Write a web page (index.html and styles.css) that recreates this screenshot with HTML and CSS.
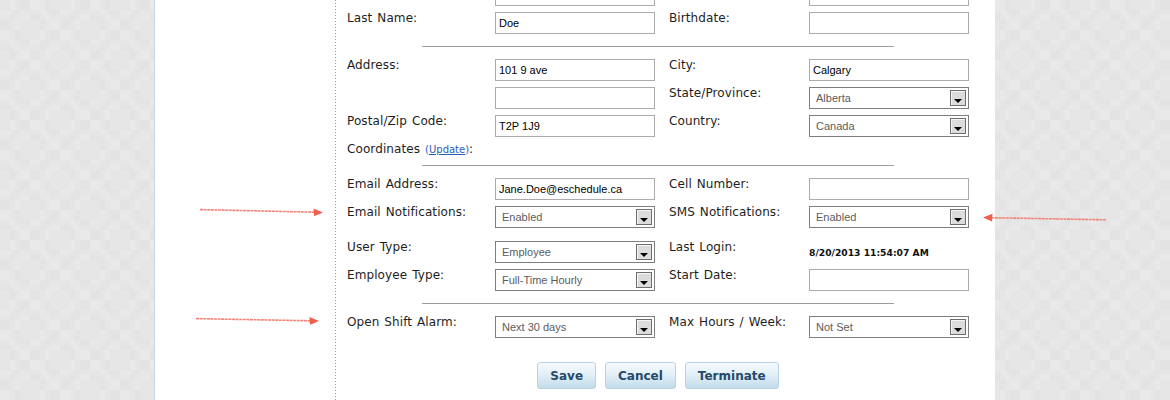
FILE: index.html
```html
<!DOCTYPE html>
<html>
<head>
<meta charset="utf-8">
<title>Employee</title>
<link rel="stylesheet" href="styles.css">
</head>
<body>
<div class="page">
  <div class="sidebar"></div>
  <div class="content">
    <div class="form">
      <div class="section">
        <div class="row">
          <div class="label"></div>
          <div class="field"><input class="text" type="text" value=""></div>
          <div class="label"></div>
          <div class="field"><input class="text" type="text" value=""></div>
        </div>
        <div class="row">
          <div class="label">Last Name:</div>
          <div class="field"><input class="text" type="text" value="Doe"></div>
          <div class="label">Birthdate:</div>
          <div class="field"><input class="text" type="text" value=""></div>
        </div>
      </div>
      <div class="sep"></div>
      <div class="section">
        <div class="row">
          <div class="label">Address:</div>
          <div class="field"><input class="text" type="text" value="101 9 ave"></div>
          <div class="label">City:</div>
          <div class="field"><input class="text" type="text" value="Calgary"></div>
        </div>
        <div class="row">
          <div class="label"></div>
          <div class="field"><input class="text" type="text" value=""></div>
          <div class="label">State/Province:</div>
          <div class="field"><div class="sel"><select><option>Alberta</option></select><span class="arrow"></span></div></div>
        </div>
        <div class="row">
          <div class="label">Postal/Zip Code:</div>
          <div class="field"><input class="text" type="text" value="T2P 1J9"></div>
          <div class="label">Country:</div>
          <div class="field"><div class="sel"><select><option>Canada</option></select><span class="arrow"></span></div></div>
        </div>
        <div class="row row-short">
          <div class="label wide">Coordinates <a class="update" href="#">(<u>Update</u>)</a>:</div>
        </div>
      </div>
      <div class="sep"></div>
      <div class="section">
        <div class="row">
          <div class="label">Email Address:</div>
          <div class="field"><input class="text" type="text" value="Jane.Doe@eschedule.ca"></div>
          <div class="label">Cell Number:</div>
          <div class="field"><input class="text" type="text" value=""></div>
        </div>
        <div class="row">
          <div class="label">Email Notifications:</div>
          <div class="field"><div class="sel"><select><option>Enabled</option></select><span class="arrow"></span></div></div>
          <div class="label">SMS Notifications:</div>
          <div class="field"><div class="sel"><select><option>Enabled</option></select><span class="arrow"></span></div></div>
        </div>
        <div class="row row-spaced">
          <div class="label">User Type:</div>
          <div class="field"><div class="sel"><select><option>Employee</option></select><span class="arrow"></span></div></div>
          <div class="label">Last Login:</div>
          <div class="field"><span class="stamp">8/20/2013 11:54:07 AM</span></div>
        </div>
        <div class="row">
          <div class="label">Employee Type:</div>
          <div class="field"><div class="sel"><select><option>Full-Time Hourly</option></select><span class="arrow"></span></div></div>
          <div class="label">Start Date:</div>
          <div class="field"><input class="text" type="text" value=""></div>
        </div>
      </div>
      <div class="sep"></div>
      <div class="section">
        <div class="row">
          <div class="label">Open Shift Alarm:</div>
          <div class="field"><div class="sel"><select><option>Next 30 days</option></select><span class="arrow"></span></div></div>
          <div class="label">Max Hours / Week:</div>
          <div class="field"><div class="sel"><select><option>Not Set</option></select><span class="arrow"></span></div></div>
        </div>
      </div>
      <div class="buttons">
        <button class="btn" type="button">Save</button>
        <button class="btn" type="button">Cancel</button>
        <button class="btn" type="button">Terminate</button>
      </div>
    </div>
  </div>
</div>
<svg class="marks" width="1170" height="400" viewBox="0 0 1170 400">
  <g class="mark-line">
    <path d="M200 209.6 L315 212.2"/>
    <path d="M196 318.6 L311 320.8"/>
    <path d="M1106 219.8 L991 217.7"/>
  </g>
  <g class="mark-head">
    <polygon points="323,212.4 313.5,208.4 314,216.2"/>
    <polygon points="319,321 309.5,317 310,324.8"/>
    <polygon points="983,217.6 992.5,213.7 992,221.5"/>
  </g>
</svg>
</body>
</html>
```

FILE: styles.css
```css
html, body {
  margin: 0;
  padding: 0;
}

body {
  width: 1170px;
  height: 400px;
  overflow: hidden;
  position: relative;
  background-color: #e6e6e6;
  background-image:
    repeating-conic-gradient(rgba(255,255,255,0.12) 0 25%, transparent 0 50%),
    repeating-conic-gradient(rgba(0,0,0,0.012) 0 25%, transparent 0 50%);
  background-size: 20px 20px, 30px 30px;
  font-family: "DejaVu Sans", Verdana, sans-serif;
}

.page {
  margin-left: 154px;
  width: 840px;
  height: 400px;
  border-left: 1px solid #c4d7e6;
  background: #ffffff;
  display: flex;
}

.sidebar {
  width: 180px;
  flex: none;
}

.content {
  flex: 1;
  padding-left: 12px;
  background-image: linear-gradient(to bottom, #9a9a9a 1px, transparent 1px);
  background-size: 1px 3px;
  background-repeat: repeat-y;
  background-position: 0 0;
}

.form {
  width: 622px;
  margin-top: -16px;
  display: flex;
  flex-direction: column;
}

.section {
  display: flex;
  flex-direction: column;
  gap: 6px;
}

.row {
  display: grid;
  grid-template-columns: 148px 174px 140px 160px;
  height: 22px;
}

.row-spaced {
  margin-top: 7px;
}

.row-short {
  height: 10px;
}

.label {
  font-size: 12px;
  line-height: 14px;
  letter-spacing: 0.1px;
  word-spacing: 1px;
  color: #1e1e1e;
  margin-top: -1px;
  white-space: nowrap;
}

.label.wide {
  grid-column: 1 / span 2;
}

.update {
  font-size: 10px;
  letter-spacing: 0;
  color: #2a5db8;
  text-decoration: none;
}

.update u {
  text-decoration: underline;
}

.field {
  display: flex;
  align-items: center;
  height: 22px;
}

.text {
  box-sizing: border-box;
  width: 160px;
  height: 22px;
  margin: 0;
  padding: 0 3px;
  border: 1px solid #ababab;
  border-radius: 0;
  background: #fff;
  font-family: "Liberation Sans", Arial, sans-serif;
  font-size: 11px;
  color: #000;
  outline: none;
}

.sel {
  position: relative;
  width: 160px;
  height: 22px;
}

.sel select {
  box-sizing: border-box;
  width: 160px;
  height: 22px;
  margin: 0;
  padding: 0 22px 0 6px;
  border: 1px solid #7e7e7e;
  border-radius: 0;
  background: #fff;
  -webkit-appearance: none;
  appearance: none;
  font-family: "Liberation Sans", Arial, sans-serif;
  font-size: 11px;
  color: #5c5c5c;
  outline: none;
}

.arrow {
  position: absolute;
  right: 3px;
  top: 3px;
  box-sizing: border-box;
  width: 16px;
  height: 16px;
  border: 1px solid #6e6e6e;
  background: #dcdcdc;
  box-shadow: inset 1px 1px 0 #f6f6f6;
}

.arrow::after {
  content: "";
  position: absolute;
  left: 3px;
  top: 8px;
  width: 0;
  height: 0;
  border-top: 4px solid #000;
  border-left: 4px solid transparent;
  border-right: 4px solid transparent;
}

.stamp {
  font-size: 9.2px;
  font-weight: bold;
  color: #111;
  white-space: nowrap;
}

.sep {
  margin: 12px 0 12px 75px;
  width: 472px;
  height: 1px;
  background: #9c9c9c;
}

.buttons {
  margin-top: 24px;
  display: flex;
  justify-content: center;
  gap: 9px;
}

.btn {
  height: 27px;
  margin: 0;
  padding: 0 12px;
  border: 1px solid #b8d2e3;
  border-radius: 3px;
  background: linear-gradient(to bottom, #f5fafd 0%, #e3f0f8 45%, #c2dceb 100%);
  font-family: "DejaVu Sans", Verdana, sans-serif;
  font-size: 12px;
  font-weight: bold;
  color: #26496a;
  cursor: pointer;
}

.marks {
  position: absolute;
  left: 0;
  top: 0;
  pointer-events: none;
}

.mark-line path {
  fill: none;
  stroke: #f0857a;
  stroke-width: 1.6;
  stroke-dasharray: 3 0.6;
}

.mark-head polygon {
  fill: #f15e4a;
}
```
